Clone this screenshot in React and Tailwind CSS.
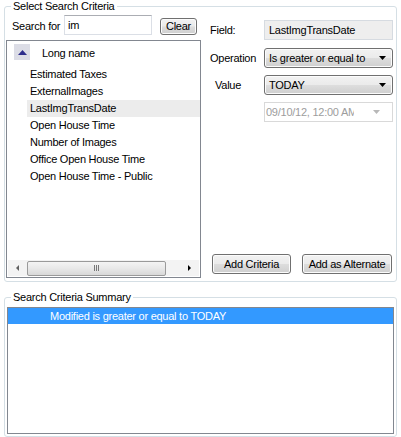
import React from "react";

function Tri({ dir = "down", color = "#000", w = 7, h = 4 }) {
  const pts =
    dir === "down"
      ? `0,0 ${w},0 ${w / 2},${h}`
      : dir === "up"
      ? `0,${h} ${w},${h} ${w / 2},0`
      : dir === "left"
      ? `${w},0 ${w},${h} 0,${h / 2}`
      : `0,0 0,${h} ${w},${h / 2}`;
  return (
    <svg width={w} height={h} viewBox={`0 0 ${w} ${h}`} className="block">
      <polygon points={pts} fill={color} />
    </svg>
  );
}

function WinButton({ children, className = "" }) {
  return (
    <div
      className={
        "flex items-center justify-center rounded-[3px] border border-[#707070] bg-[linear-gradient(#f2f2f2_0%,#ebebeb_48%,#dddddd_52%,#cfcfcf_100%)] shadow-[inset_0_0_0_1px_#fcfcfc] text-[#000] " +
        className
      }
    >
      {children}
    </div>
  );
}

function Combo({ value }) {
  return (
    <div className="flex h-[20px] w-[129px] items-center rounded-[3px] border border-[#707070] bg-[linear-gradient(#f2f2f2_0%,#ebebeb_48%,#dddddd_52%,#cfcfcf_100%)] shadow-[inset_0_0_0_1px_#fcfcfc] pl-[4px] pr-[6px]">
      <span className="flex-1 whitespace-nowrap">{value}</span>
      <Tri dir="down" color="#000" w={7} h={4} />
    </div>
  );
}

const rows = [
  "Estimated Taxes",
  "ExternalImages",
  "LastImgTransDate",
  "Open House Time",
  "Number of Images",
  "Office Open House Time",
  "Open House Time - Public",
];

export default function App() {
  return (
    <div className="w-[401px] h-[437px] bg-white px-[4px] text-[11px] leading-[13px] text-[#000] font-['Liberation_Sans',Arial,sans-serif] tracking-[-0.25px] overflow-hidden">
      <fieldset className="w-[393px] h-[282px] border border-[#d5dfe5] rounded-[3px] flex flex-col">
        <legend className="ml-[6px] px-[2px] leading-[13px]">Select Search Criteria</legend>
        <div className="flex flex-1 min-h-0">
          {/* left column */}
          <div className="ml-[1px] w-[195px] flex flex-col">
            <div className="h-[27px] flex items-start">
              <div className="w-[58px] pl-[6px] pt-[7px] whitespace-nowrap">Search for</div>
              <div className="mt-[2px] h-[20px] w-[88px] border border-[#dbdfe6] border-t-[#abadb3] bg-white pl-[3px] flex items-center">
                im
              </div>
              <WinButton className="ml-[8px] mt-[5px] w-[37px] h-[17px]">Clear</WinButton>
            </div>
            <div className="w-[195px] h-[238px] border border-[#828790] bg-white flex flex-col">
              <div className="h-[25px] flex items-center">
                <div className="ml-[7px] -mt-[3px] w-[16px] h-[16px] bg-[#dcdde6] flex items-center justify-center">
                  <Tri dir="up" color="#2e2e8c" w={9} h={5} />
                </div>
                <div className="ml-[12px]">Long name</div>
              </div>
              {rows.map((r) => (
                <div
                  key={r}
                  className={
                    "h-[17px] ml-[20px] pl-[3px] leading-[17px] whitespace-nowrap " +
                    (r === "LastImgTransDate" ? "bg-[#ececec]" : "")
                  }
                >
                  {r}
                </div>
              ))}
              <div className="flex-1" />
              <div className="h-[16px] mx-[1px] mb-[1px] bg-[#f3f3f3] flex items-center">
                <div className="w-[19px] flex items-center justify-center">
                  <Tri dir="left" color="#606060" w={3} h={6} />
                </div>
                <div className="w-[139px] h-[15px] rounded-[2px] border border-[#9a9a9a] bg-[linear-gradient(#f4f4f4_0%,#e8e8e8_50%,#d8d8d8_100%)] flex items-center justify-center gap-[1px]">
                  <div className="w-[1px] h-[6px] bg-[#777]" />
                  <div className="w-[1px] h-[6px] bg-[#777]" />
                  <div className="w-[1px] h-[6px] bg-[#777]" />
                </div>
                <div className="flex-1" />
                <div className="w-[19px] flex items-center justify-center">
                  <Tri dir="right" color="#000" w={3} h={6} />
                </div>
              </div>
            </div>
          </div>
          {/* right column */}
          <div className="ml-[9px] w-[183px] flex flex-col pb-[7px]">
            <div className="mt-[7px] h-[20px] flex items-center">
              <div className="w-[54px]">Field:</div>
              <div className="h-[20px] w-[129px] border border-[#d6dbe1] bg-[#eeeeee] pl-[4px] flex items-center">
                LastImgTransDate
              </div>
            </div>
            <div className="mt-[8px] flex items-center">
              <div className="w-[54px]">Operation</div>
              <Combo value="Is greater or equal to" />
            </div>
            <div className="mt-[7px] flex items-center">
              <div className="w-[54px] pl-[5px]">Value</div>
              <Combo value="TODAY" />
            </div>
            <div className="mt-[7px] flex items-center">
              <div className="w-[54px]" />
              <div className="h-[20px] w-[129px] border border-[#d9d9d9] bg-white flex items-center pl-[1px]">
                <div className="w-[88px] overflow-hidden whitespace-nowrap text-[#9d9d9d]">
                  09/10/12, 12:00 AM
                </div>
                <div className="ml-[19px]">
                  <Tri dir="down" color="#b8b8b8" w={7} h={4} />
                </div>
              </div>
            </div>
            <div className="flex-1" />
            <div className="flex">
              <WinButton className="ml-[2px] w-[79px] h-[20px]">Add Criteria</WinButton>
              <WinButton className="ml-[11px] w-[90px] h-[20px]">Add as Alternate</WinButton>
            </div>
          </div>
        </div>
      </fieldset>
      <fieldset className="mt-[9px] w-[393px] h-[146px] border border-[#d5dfe5] rounded-[3px] flex flex-col">
        <legend className="ml-[6px] px-[2px] leading-[13px]">Search Criteria Summary</legend>
        <div className="mx-[2px] mt-[3px] mb-[2px] flex-1 border border-[#828790] bg-white">
          <div className="h-[16px] bg-[#3399ff] text-white pl-[42px] flex items-center whitespace-nowrap">
            Modified is greater or equal to TODAY
          </div>
        </div>
      </fieldset>
    </div>
  );
}
